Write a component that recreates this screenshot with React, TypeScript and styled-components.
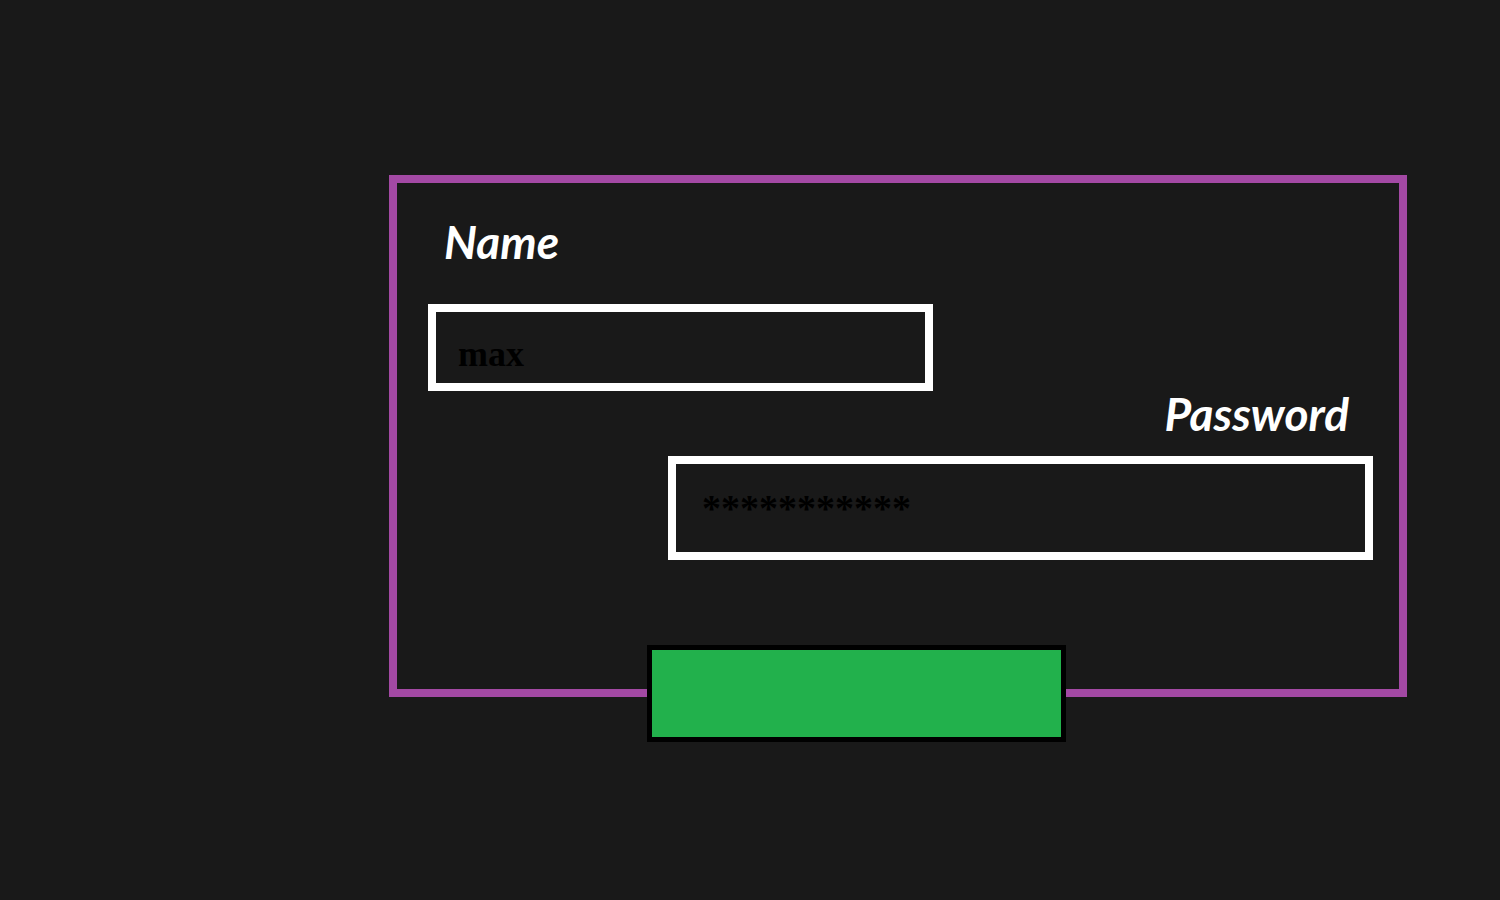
import React from "react";
import styled, { createGlobalStyle } from "styled-components";

const GlobalStyle = createGlobalStyle`
  *, *::before, *::after { box-sizing: border-box; }
  body {
    margin: 0;
    background: #191919;
    color: #ffffff;
  }
`;

const Page = styled.main`
  display: grid;
  grid-template-columns: 389fr 1018fr 93fr;
  align-items: start;
  min-height: 100vh;
  padding: 175px 0 80px;
`;

const Panel = styled.form`
  grid-column: 2;
  border: 8px solid #a349a4;
  padding: 39px 26px 0 31px;
`;

const Fields = styled.div`
  display: grid;
  grid-template-columns: 240fr 265fr 440fr;
`;

const Field = styled.div<{ $side: "start" | "end" }>`
  grid-column: ${(p) => (p.$side === "start" ? "1 / 3" : "2 / 4")};
  display: flex;
  flex-direction: column;
  gap: ${(p) => (p.$side === "start" ? 42 : 22)}px;
  margin-top: ${(p) => (p.$side === "start" ? 0 : 3)}px;
`;

const Label = styled.label<{ $align: "left" | "right" }>`
  padding: 0 24px 0 16px;
  font: italic 700 46px/40px "Segoe Script", Lato, cursive;
  text-align: ${(p) => p.$align};
`;

const TextBox = styled.input`
  display: block;
  width: 100%;
  border: 8px solid #ffffff;
  border-radius: 0;
  background: transparent;
  color: #000000;
  outline: none;
  font-family: "Liberation Serif", "Times New Roman", serif;
  font-weight: 700;
  &::placeholder {
    color: #000000;
    opacity: 1;
  }
`;

const NameBox = styled(TextBox)`
  height: 87px;
  padding: 22px 22px 9px;
  font-size: 36px;
`;

const PasswordBox = styled(TextBox)`
  height: 104px;
  padding: 23px 26px;
  font-size: 38px;
`;

const Actions = styled.div`
  display: grid;
  grid-template-columns: 219fr 419fr 307fr;
  margin: 85px 0 -53px;
`;

const SubmitButton = styled.button`
  grid-column: 2;
  height: 97px;
  border: 5px solid #000000;
  border-radius: 0;
  background: #22b14c;
  cursor: pointer;
`;

export default function App() {
  return (
    <>
      <GlobalStyle />
      <Page>
        <Panel onSubmit={(event) => event.preventDefault()}>
          <Fields>
            <Field $side="start">
              <Label $align="left" htmlFor="name">Name</Label>
              <NameBox id="name" type="text" defaultValue="max" />
            </Field>
            <Field $side="end">
              <Label $align="right" htmlFor="password">Password</Label>
              <PasswordBox id="password" type="password" placeholder="***********" />
            </Field>
          </Fields>
          <Actions>
            <SubmitButton type="submit" aria-label="Submit" />
          </Actions>
        </Panel>
      </Page>
    </>
  );
}
